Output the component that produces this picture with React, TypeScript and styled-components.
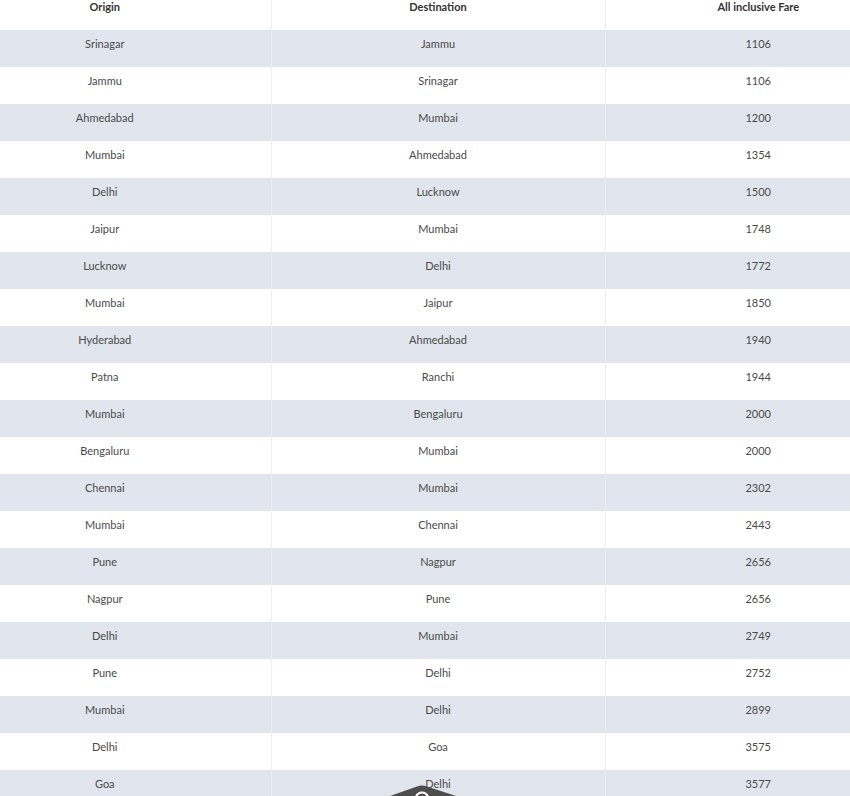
import React from "react";
import styled, { createGlobalStyle } from "styled-components";

const GlobalStyle = createGlobalStyle`
  html, body { margin: 0; padding: 0; background: #ffffff; overflow: hidden; }
  body { font-family: "Lato", "Noto Sans", sans-serif; }
`;

const Page = styled.div`
  display: flex;
  justify-content: center;
  width: 850px;
  height: 796px;
  overflow: hidden;
`;

const Table = styled.table`
  flex: 0 0 972px;
  width: 972px;
  border-collapse: collapse;
  table-layout: fixed;
`;

const HeadCell = styled.th<{ $w: number }>`
  width: ${(p) => p.$w}px;
  height: 30px;
  padding: 0 0 12px;
  box-sizing: border-box;
  text-align: center;
  vertical-align: top;
  font-size: 11px;
  line-height: 14px;
  font-weight: 700;
  color: #333333;
  border-left: 1px solid #eceef2;
  &:first-child { border-left: none; }
`;

const Row = styled.tr<{ $striped: boolean }>`
  background: ${(p) => (p.$striped ? "#e1e6ee" : "#ffffff")};
`;

const Cell = styled.td`
  height: 37px;
  padding: 0 0 10px;
  box-sizing: border-box;
  text-align: center;
  vertical-align: middle;
  font-size: 11px;
  line-height: 14px;
  color: #4a4a4a;
  border-left: 1px solid #eceef2;
  &:first-child { border-left: none; }
`;

const FloatButton = styled.svg`
  position: fixed;
  left: 388px;
  bottom: 0;
  width: 70px;
  height: 12px;
  display: block;
`;

const rows: [string, string, number][] = [
  ["Srinagar", "Jammu", 1106],
  ["Jammu", "Srinagar", 1106],
  ["Ahmedabad", "Mumbai", 1200],
  ["Mumbai", "Ahmedabad", 1354],
  ["Delhi", "Lucknow", 1500],
  ["Jaipur", "Mumbai", 1748],
  ["Lucknow", "Delhi", 1772],
  ["Mumbai", "Jaipur", 1850],
  ["Hyderabad", "Ahmedabad", 1940],
  ["Patna", "Ranchi", 1944],
  ["Mumbai", "Bengaluru", 2000],
  ["Bengaluru", "Mumbai", 2000],
  ["Chennai", "Mumbai", 2302],
  ["Mumbai", "Chennai", 2443],
  ["Pune", "Nagpur", 2656],
  ["Nagpur", "Pune", 2656],
  ["Delhi", "Mumbai", 2749],
  ["Pune", "Delhi", 2752],
  ["Mumbai", "Delhi", 2899],
  ["Delhi", "Goa", 3575],
  ["Goa", "Delhi", 3577],
];

export default function App() {
  return (
    <>
      <GlobalStyle />
      <Page>
        <Table>
          <thead>
            <tr>
              <HeadCell $w={332}>Origin</HeadCell>
              <HeadCell $w={334}>Destination</HeadCell>
              <HeadCell $w={306}>All inclusive Fare</HeadCell>
            </tr>
          </thead>
          <tbody>
            {rows.map(([o, d, f], i) => (
              <Row key={i} $striped={i % 2 === 0}>
                <Cell>{o}</Cell>
                <Cell>{d}</Cell>
                <Cell>{f}</Cell>
              </Row>
            ))}
          </tbody>
        </Table>
      </Page>
      <FloatButton viewBox="0 0 70 12" aria-hidden="true">
        <path d="M2 12 L29 2.5 Q34 0.6 39 2.5 L68 12 Z" fill="#4d4d4d" />
        <path d="M28 12.5 A6.5 6.5 0 0 1 40 12.5" fill="none" stroke="#ffffff" strokeWidth="2" />
      </FloatButton>
    </>
  );
}
